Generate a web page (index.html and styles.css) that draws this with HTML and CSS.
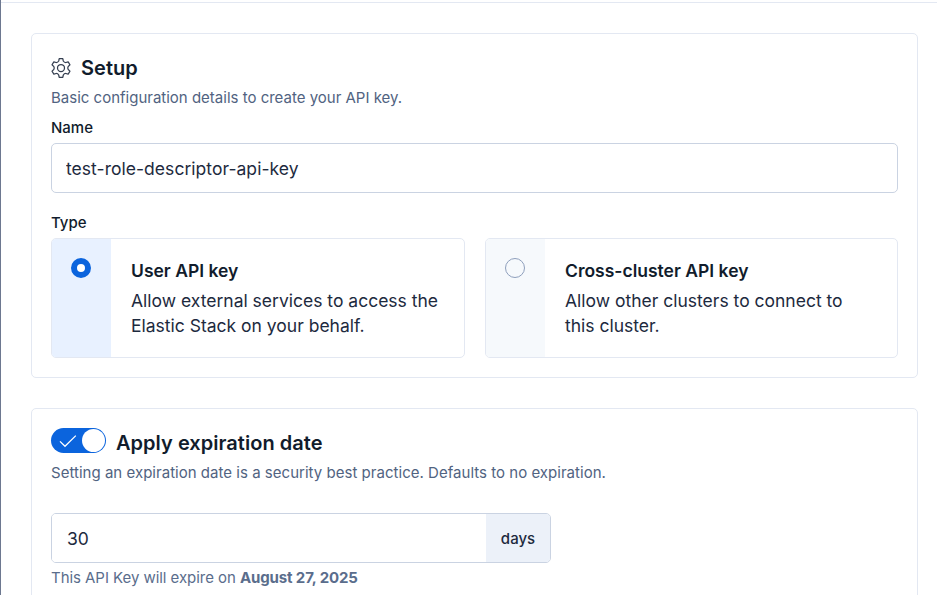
FILE: index.html
```html
<!DOCTYPE html>
<html lang="en">
<head>
<meta charset="utf-8">
<title>Create API key</title>
<link rel="stylesheet" href="styles.css">
</head>
<body>
<main class="flyout">
  <section class="panel">
    <h2 class="title">
      <svg class="gear" viewBox="0 0 20 20" width="20" height="20" aria-hidden="true">
        <path d="M8.2.7h3.6L12.3 3Q13.2 4.6 14.9 4.5L17.15 3.79 18.95 6.91 17.2 8.5Q16.3 10 17.2 11.5L18.95 13.09 17.15 16.21 14.9 15.5Q13.2 15.4 12.3 17L11.8 19.3H8.2L7.7 17Q6.8 15.4 5.1 15.5L2.85 16.21 1.05 13.09 2.8 11.5Q3.7 10 2.8 8.5L1.05 6.91 2.85 3.79 5.1 4.5Q6.8 4.6 7.7 3z"/>
        <circle cx="10" cy="10" r="3.5"/>
      </svg>
      <span>Setup</span>
    </h2>
    <p class="subdued">Basic configuration details to create your API key.</p>
    <label class="label" for="name">Name</label>
    <input class="field" id="name" type="text" value="test-role-descriptor-api-key">
    <div class="label type-label">Type</div>
    <div class="cards">
      <div class="card selected">
        <div class="card-side"><span class="radio"></span></div>
        <div class="card-body">
          <h3 class="card-title">User API key</h3>
          <p class="card-text">Allow external services to access the<br>Elastic Stack on your behalf.</p>
        </div>
      </div>
      <div class="card">
        <div class="card-side"><span class="radio"></span></div>
        <div class="card-body">
          <h3 class="card-title">Cross-cluster API key</h3>
          <p class="card-text">Allow other clusters to connect to<br>this cluster.</p>
        </div>
      </div>
    </div>
  </section>
  <section class="panel expiration">
    <div class="switch-row">
      <span class="switch">
        <svg class="check" viewBox="0 0 18 14" width="18" height="14" aria-hidden="true"><path d="M1 7.4l5 4.9L16.8 1.6"/></svg>
        <span class="thumb"></span>
      </span>
      <h2 class="title">Apply expiration date</h2>
    </div>
    <p class="subdued note">Setting an expiration date is a security best practice. Defaults to no expiration.</p>
    <div class="group">
      <input class="group-input" type="text" value="30" aria-label="Lifetime">
      <span class="unit">days</span>
    </div>
    <p class="help">This API Key will expire on <strong>August 27, 2025</strong></p>
  </section>
</main>
</body>
</html>
```
FILE: styles.css
```css
* {
  box-sizing: border-box;
}

body {
  margin: 0;
  height: 595px;
  overflow: hidden;
  background: #fff;
  color: #1d2a3e;
  font-family: Inter, "Liberation Sans", sans-serif;
}

h2, h3, p {
  margin: 0;
}

.flyout {
  height: 595px;
  overflow: hidden;
  border-left: 1px solid #6d7890;
  padding: 2px 19px 0 30px;
  background: linear-gradient(#e3e8f2, #e3e8f2) 0 2px / 100% 1px no-repeat;
}

.panel {
  height: 345px;
  margin-top: 31px;
  padding: 19px;
  border: 1px solid #e3e8f2;
  border-radius: 5px;
}

.title {
  display: flex;
  align-items: center;
  height: 30px;
  color: #111c2c;
  font-size: 20px;
  font-weight: 600;
  line-height: 30px;
  letter-spacing: 0.03px;
}

.gear {
  margin-right: 10px;
  fill: none;
  stroke: #343e50;
  stroke-width: 1.25;
  stroke-linejoin: round;
}

.subdued {
  margin-top: 5px;
  color: #516381;
  font-size: 15px;
  line-height: 20px;
}

.note {
  letter-spacing: 0.024px;
}

.label {
  display: block;
  margin-top: 10px;
  color: #111c2c;
  font-size: 15px;
  font-weight: 500;
  line-height: 20px;
}

.type-label {
  margin-top: 20px;
}

.field {
  display: block;
  width: 100%;
  height: 50px;
  margin-top: 5px;
  padding: 0 14px;
  border: 1px solid #cad3e2;
  border-radius: 5px;
  color: #1d2a3e;
  font: 17.5px/25px Inter, "Liberation Sans", sans-serif;
  letter-spacing: 0.04px;
}

.cards {
  display: grid;
  grid-template-columns: 414px 413px;
  gap: 20px;
  margin-top: 5px;
}

.card {
  display: flex;
  height: 120px;
  overflow: hidden;
  border: 1px solid #e3e8f2;
  border-radius: 5px;
}

.card-side {
  flex: none;
  width: 59px;
  padding: 19px;
  background: #f6f9fc;
}

.selected .card-side {
  background: #e8f1ff;
}

.radio {
  display: block;
  width: 20px;
  height: 20px;
  border: 1px solid #8e9fbc;
  border-radius: 50%;
}

.selected .radio {
  border: 6px solid #0b64dd;
  background: #fff;
}

.card-body {
  padding: 19px 0 0 20px;
}

.card-title {
  color: #111c2c;
  font-size: 17.5px;
  font-weight: 600;
  line-height: 25px;
}

.card-text {
  margin-top: 5px;
  font-size: 17.5px;
  line-height: 25px;
}

.expiration {
  margin-top: 30px;
}

.switch-row {
  display: flex;
  align-items: flex-start;
  gap: 10px;
}

.switch {
  display: flex;
  align-items: center;
  justify-content: space-between;
  width: 55px;
  height: 25px;
  padding: 0 1px 0 8px;
  border-radius: 13px;
  background: #0b64dd;
}

.check {
  fill: none;
  stroke: #fff;
  stroke-width: 1.3;
}

.thumb {
  width: 23px;
  height: 23px;
  border-radius: 50%;
  background: #fff;
}

.group {
  display: flex;
  width: 500px;
  height: 50px;
  margin-top: 30px;
  overflow: hidden;
  border: 1px solid #cad3e2;
  border-radius: 5px;
}

.group-input {
  flex: 1;
  min-width: 0;
  padding: 0 15px;
  border: 0;
  color: #1d2a3e;
  font: 17.5px/25px Inter, "Liberation Sans", sans-serif;
}

.unit {
  width: 64px;
  background: #ecf1f9;
  color: #1d2a3e;
  font-size: 15px;
  font-weight: 500;
  line-height: 49px;
  text-align: center;
}

.help {
  margin-top: 5px;
  color: #5a6d8c;
  font-size: 15px;
  line-height: 20px;
  letter-spacing: -0.05px;
}

.help strong {
  font-weight: 700;
  letter-spacing: -0.13px;
}
```
